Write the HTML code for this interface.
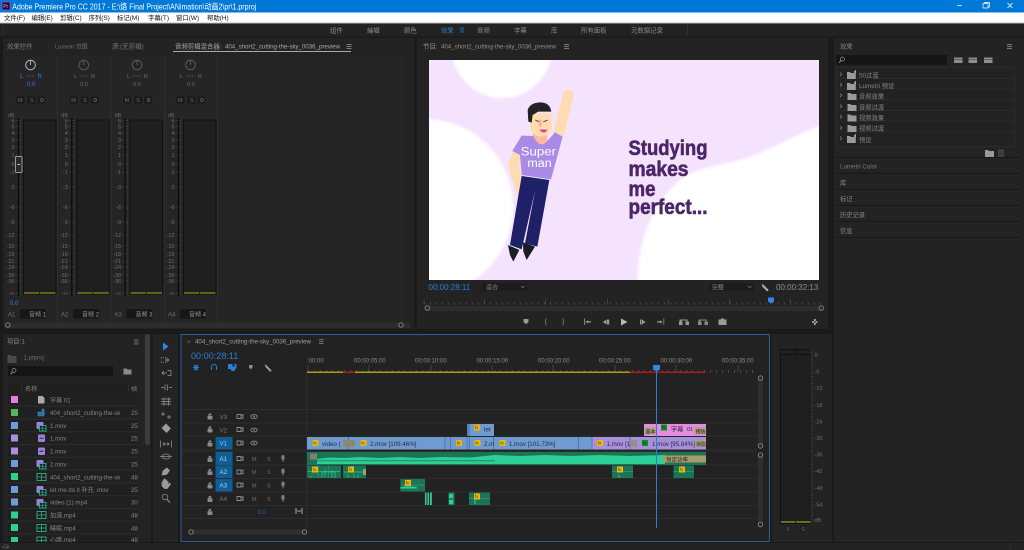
<!DOCTYPE html>
<html><head><meta charset="utf-8"><title>Adobe Premiere Pro CC 2017</title>
<style>
html,body{margin:0;padding:0;width:1024px;height:550px;overflow:hidden;background:#1a1a1a}
svg.root{display:block;filter:blur(.3px)}
text{font-family:"Liberation Sans","Noto Sans CJK SC",sans-serif;font-size:6.4px;fill:#8a8a8a}
.b{fill:#2a7fd6}
.m{fill:#6e6e6e;font-size:5.5px}
.c{fill:#2b2b3a;font-size:6.2px}
.p{font-size:6.1px;fill:#858585}
.e{font-size:6.3px;fill:#858585}
.t{font-size:6.4px;fill:#111}
.r{font-size:6px;fill:#8c8c8c}
.imp{font-size:21px;font-weight:bold;fill:#4c2667;stroke:#4c2667;stroke-width:.6}
</style></head><body>
<svg class="root" width="1024" height="550" viewBox="0 0 1024 550" xmlns="http://www.w3.org/2000/svg">
<defs>
<clipPath id="pv"><rect x="429" y="60" width="390" height="220"/></clipPath>
<filter id="soft" x="-10%" y="-10%" width="120%" height="120%"><feGaussianBlur stdDeviation="1.2"/></filter>
<g id="mx">
<text class="m" x="8" y="117">dB</text>
<g text-anchor="end">
<text class="m" x="14.5" y="122.5">6</text><text class="m" x="14.5" y="128.5">5</text><text class="m" x="14.5" y="135">4</text><text class="m" x="14.5" y="142">3</text><text class="m" x="14.5" y="149">2</text><text class="m" x="14.5" y="157">1</text><text class="m" x="14.5" y="166">0</text><text class="m" x="14.5" y="174">-1</text><text class="m" x="14.5" y="189">-3</text><text class="m" x="14.5" y="209">-6</text><text class="m" x="14.5" y="224">-9</text><text class="m" x="14.5" y="237">-12</text><text class="m" x="14.5" y="248">-15</text><text class="m" x="14.5" y="256">-18</text><text class="m" x="14.5" y="263">-21</text><text class="m" x="14.5" y="269">-24</text><text class="m" x="14.5" y="277">-30</text><text class="m" x="14.5" y="283">-36</text><text class="m" x="14.5" y="295">-∞</text>
</g>
<path d="M15.5 120.5h6M15.5 126.5h6M15.5 133h6M15.5 140h6M15.5 147h6M15.5 155h6M15.5 164h6M15.5 172h6M15.5 187h6M15.5 207h6M15.5 222h6M15.5 235h6M15.5 246h6M15.5 254h6M15.5 261h6M15.5 267h6M15.5 275h6M15.5 281h6M15.5 293h6" stroke="#555" stroke-width=".6" stroke-dasharray="2 1.5"/>
<rect x="17.8" y="118" width="1.3" height="178" fill="#0c0c0c"/>
<path d="M20.8 118V296" stroke="#4a4a4a" stroke-width=".7" stroke-dasharray="1 1.5"/>
<rect x="23.5" y="120" width="32.5" height="174" fill="#1f1f1f" stroke="#111" stroke-width="1"/>
<path d="M24 293h15.2M40 293h15.5" stroke="#7e7a1c" stroke-width="1.4"/>
<circle cx="30.5" cy="65" r="4.8" fill="none" stroke-width="1" stroke="#5a5a5a"/><path d="M30.5 60V65" stroke="#5a5a5a"/>
<path d="M26 76h9" stroke="#4d4d4d" stroke-width="1" stroke-dasharray="1 .5"/>
<g fill="#1a1a1a" stroke="#2d2d2d" stroke-width=".6"><rect x="16" y="96" width="9" height="8" rx="1"/><rect x="27" y="96" width="9" height="8" rx="1"/><rect x="37" y="96" width="9" height="8" rx="1"/></g>
<text class="m" x="18" y="102.2">M</text><text class="m" x="29.7" y="102.2">S</text><text class="m" x="39.5" y="102.2">⚙</text>
<rect x="20" y="309" width="26" height="9.5" rx="1" fill="#171717"/>
</g>
<g id="fo"><path d="M0 2h3l1 1h5v6H0z" fill="#9a9a9a"/></g>
<g id="fp"><path d="M0 2h3l1 1h3V1h1V0h1v3h-.2V9H0z" fill="#9a9a9a"/></g>
<g id="fx"><rect width="6" height="6" fill="#e7b90e"/><text x=".8" y="4.7" style="font-size:4.5px;fill:#5b4300">fx</text></g>
<g id="gx"><rect width="6" height="6" fill="#0f8f1b"/><text x=".8" y="4.7" style="font-size:4.5px;fill:#063f0a">fx</text></g>
<g id="clipico"><rect x="0" y="0" width="7" height="7" rx="1" fill="#9c80dc"/><rect x="3" y="3.5" width="6.5" height="5.5" fill="#1c1c1c" stroke="#2bb68a" stroke-width=".9"/><path d="M3 6.2h6.5M6.2 3.5v5.5" stroke="#2bb68a" stroke-width=".7"/></g>
<g id="greenico"><rect x="0" y="0" width="9" height="7" fill="#1c1c1c" stroke="#2bb68a" stroke-width=".9"/><path d="M0 3.5h9M4.5 0v7" stroke="#2bb68a" stroke-width=".8"/></g>
<g id="purpico"><rect x="0" y="0" width="7" height="7.5" rx="1" fill="#9c80dc"/><rect x="1.5" y="3.2" width="4" height="1" fill="#222"/></g>
<g id="lock"><path d="M-2.2 0h4.4v3.2h-4.4zM-1.3 0v-1.2a1.3 1.3 0 0 1 2.6 0" fill="#8a8a8a" stroke="#8a8a8a" stroke-width=".5"/></g>
<g id="cam"><path d="M-3 -2h4v4h-4zM1 -.8l2-1.2v4l-2-1.2" fill="none" stroke="#8a8a8a" stroke-width=".9"/></g>
<g id="eye"><ellipse rx="3.2" ry="1.9" fill="none" stroke="#8a8a8a" stroke-width=".9"/><circle r=".9" fill="#8a8a8a"/></g>
<g id="mic"><rect x="-1.6" y="-3.5" width="3.2" height="5" rx="1.6" fill="#7e7e7e"/><path d="M0 1.5V3.5" stroke="#7e7e7e"/></g>
</defs>

<rect width="1024" height="550" fill="#1a1a1a"/>
<!-- title bar -->
<rect width="1024" height="12.5" fill="#0078d7"/>
<rect x="2" y="2" width="8" height="8" fill="#2a0a38" stroke="#a564c8" stroke-width=".6"/>
<text x="3.2" y="8" style="font-size:5px;fill:#d9a6f0">Pr</text>
<text x="12.3" y="9.3" textLength="244" lengthAdjust="spacingAndGlyphs" style="font-size:8.5px;fill:#fff">Adobe Premiere Pro CC 2017 - E:\烙 Final Project\ANimation\动画2\pr\1.prproj</text>
<path d="M957 5.5h5" stroke="#fff" stroke-width=".7"/>
<path d="M983 3.5h5v4.5h-5zM984.5 3.5v-1h5v4.5h-1.5" fill="none" stroke="#fff" stroke-width=".7"/>
<path d="M1007.5 3l5 5M1012.5 3l-5 5" stroke="#fff" stroke-width=".8"/>
<!-- menu -->
<rect y="12.5" width="1024" height="10" fill="#fff"/>
<rect y="22.5" width="1024" height="1" fill="#bbb"/>
<text class="t" x="4" y="20">文件(F)</text><text class="t" x="31.5" y="20">编辑(E)</text><text class="t" x="60" y="20">剪辑(C)</text><text class="t" x="88.5" y="20">序列(S)</text><text class="t" x="117" y="20">标记(M)</text><text class="t" x="148" y="20">字幕(T)</text><text class="t" x="176" y="20">窗口(W)</text><text class="t" x="207" y="20">帮助(H)</text>
<!-- workspaces -->
<rect y="23.5" width="1024" height="13" fill="#222"/>
<path d="M3 25v10M687.5 24v12" stroke="#2e2e2e"/>
<text x="330" y="32.5">组件</text><text x="367" y="32.5">编辑</text><text x="404" y="32.5">颜色</text><text x="441" y="32.5" class="b">效果</text>
<path d="M460 28h4M460 30h4M460 32h4" stroke="#2a7fd6" stroke-width=".8"/>
<text x="477" y="32.5">音频</text><text x="514" y="32.5">字幕</text><text x="551" y="32.5">库</text><text x="581" y="32.5">所有面板</text><text x="631" y="32.5">元数据记录</text>

<!-- mixer panel -->
<rect x="3" y="38" width="411" height="291" fill="#232323"/>
<text x="7" y="48.5" style="fill:#7a7a7a">效果控件</text><text x="55" y="48.5" style="font-size:5.8px;fill:#707070">Lumetri 范围</text><text x="112" y="48.5" style="fill:#777">源:(无剪辑)</text>
<text x="175" y="48.5" style="fill:#a8a8a8">音频剪辑混合器:</text>
<text x="225" y="48.5" textLength="115" lengthAdjust="spacingAndGlyphs" style="font-size:6.2px;fill:#a8a8a8">404_short2_cutting-the-sky_0036_preview</text>
<path d="M346.5 44.5h5M346.5 46.5h5M346.5 48.5h5" stroke="#999" stroke-width=".7"/>
<rect x="173" y="51" width="178" height="1" fill="#aaa"/>
<rect x="4" y="56" width="401" height="266" fill="#252525"/>
<path d="M57.5 56v266M111 56v266M164.5 56v266M217.5 56v266" stroke="#2f2f2f"/>
<use href="#mx"/><use href="#mx" x="53.3"/><use href="#mx" x="106.6"/><use href="#mx" x="160"/>
<circle cx="30.5" cy="65" r="4.8" fill="#252525" stroke="#b0b0b0" stroke-width="1"/><path d="M30.5 60V65" stroke="#b0b0b0"/>
<text x="20" y="78" style="font-size:6px;fill:#2a7fd6">L</text><text x="37.5" y="78" style="font-size:6px;fill:#2a7fd6">R</text>
<text x="27" y="86" style="font-size:6px;fill:#2a7fd6">0.0</text>
<text x="74" y="78" class="m">L</text><text x="91" y="78" class="m">R</text><text x="80" y="86" class="m">0.0</text><text x="127" y="78" class="m">L</text><text x="144" y="78" class="m">R</text><text x="133" y="86" class="m">0.0</text><text x="180" y="78" class="m">L</text><text x="198" y="78" class="m">R</text><text x="187" y="86" class="m">0.0</text>
<rect x="15.5" y="156.5" width="6.5" height="16" rx="1" fill="#2a2a2a" stroke="#9a9a9a" stroke-width="1"/><path d="M17.5 164.5h2.5" stroke="#ccc"/>
<text x="10" y="305" style="font-size:6px;fill:#2a7fd6">0.0</text>
<text x="8" y="316.5" class="m" style="font-size:6px">A1</text><text x="61" y="316.5" class="m" style="font-size:6px">A2</text><text x="114.5" y="316.5" class="m" style="font-size:6px">A3</text><text x="168" y="316.5" class="m" style="font-size:6px">A4</text>
<text x="29" y="316.5" style="font-size:6px;fill:#999">音频 1</text><text x="82" y="316.5" style="font-size:6px;fill:#999">音频 2</text><text x="135.5" y="316.5" style="font-size:6px;fill:#999">音频 3</text><text x="189" y="316.5" style="font-size:6px;fill:#999">音频 4</text>
<rect x="5" y="322.5" width="405" height="5.5" fill="#2d2d2d"/>
<circle cx="7.8" cy="325" r="2.2" fill="#232323" stroke="#8a8a8a" stroke-width=".9"/><circle cx="401" cy="325" r="2.2" fill="#232323" stroke="#8a8a8a" stroke-width=".9"/>

<!-- program panel -->
<rect x="417" y="38" width="411" height="291" fill="#232323"/>
<text x="423" y="48.5" style="fill:#8f8f8f">节目:</text>
<text x="441" y="48.5" textLength="115" lengthAdjust="spacingAndGlyphs" style="font-size:6.2px;fill:#8f8f8f">404_short2_cutting-the-sky_0036_preview</text>
<path d="M564 44.5h5M564 46.5h5M564 48.5h5" stroke="#999" stroke-width=".7"/>
<!-- preview -->
<g clip-path="url(#pv)">
<rect x="429" y="60" width="390" height="220" fill="#f5e3fd"/>
<g filter="url(#soft)">
<circle cx="502" cy="48" r="50" fill="#fff"/>
<circle cx="425" cy="207" r="88" fill="#fff"/>
<path d="M637 290C637 245 650 205 680 180C700 165 730 165 755 155C775 147 795 135 830 122V290Z" fill="#fff"/>
</g>
<g transform="translate(480 70) scale(.3333)">
<path d="M265 75L236 190" stroke="#fedcb2" stroke-width="32" stroke-linecap="round" fill="none"/>
<path d="M113 250L100 285L126 370" stroke="#fedcb2" stroke-width="30" stroke-linecap="round" stroke-linejoin="round" fill="none"/>
<path d="M125 318L90 525L125 538L166 358L135 520L172 530L208 330Z" fill="#1e2068"/>
<path d="M84 525L118 540L100 575L90 555ZM129 517L165 530L140 570L130 545Z" fill="#1c1c24"/>
<path d="M158 190h44v34q-22 12-44 0z" fill="#ffb9a0"/>
<path d="M125 197L160 198Q180 240 203 212L225 187L248 200L213 328L125 315L120 255L97 243Z" fill="#a98ae6"/>
<path d="M150 130h65v40q-5 30-32 30q-25 0-33-30z" fill="#fedcb2"/>
<path d="M145 155L143 120Q150 98 180 97Q210 97 214 125L175 125L158 135L155 158Z" fill="#232326"/>
<path d="M166 150l12 6M190 156l13-6" stroke="#555" stroke-width="3" fill="none"/>
<path d="M178 174q12 4 24-1q-2 16-11 14q-9 1-13-13z" fill="#e93d6c"/><path d="M178 174q12 4 24-1l-2 5h-20z" fill="#fff"/>
<rect x="176" y="148" width="9" height="22" rx="4" fill="#ffae96"/>
<text x="122" y="257" textLength="106" lengthAdjust="spacingAndGlyphs" style="font-size:36px;fill:#fff">Super</text>
<text x="142" y="291" textLength="73" lengthAdjust="spacingAndGlyphs" style="font-size:36px;fill:#fff">man</text>
</g>
<text x="628.5" y="155" textLength="79" lengthAdjust="spacingAndGlyphs" class="imp">Studying</text>
<text x="628.5" y="176" textLength="60" lengthAdjust="spacingAndGlyphs" class="imp">makes</text>
<text x="628.5" y="196" textLength="27" lengthAdjust="spacingAndGlyphs" class="imp">me</text>
<text x="628.5" y="214" textLength="79" lengthAdjust="spacingAndGlyphs" class="imp">perfect...</text>
</g>
<text x="428.5" y="290" style="font-size:8px;fill:#2a7fd6">00:00:28:11</text>
<rect x="482" y="283" width="45" height="8" fill="#1c1c1c"/><text x="486" y="289.5" style="font-size:6px">适合</text><path d="M521 286l1.8 1.8 1.8-1.8" stroke="#777" fill="none" stroke-width=".7"/>
<rect x="709" y="283" width="45" height="8" fill="#1c1c1c"/><text x="712" y="289.5" style="font-size:6px">完整</text><path d="M748 286l1.8 1.8 1.8-1.8" stroke="#777" fill="none" stroke-width=".7"/>
<path d="M762 284l2 1.5 4.5 4.5-1.3 1.3-4.5-4.5z" fill="#aaa" stroke="#aaa" stroke-width=".5"/>
<text x="776" y="290" style="font-size:8px;fill:#8f8f8f">00:00:32:13</text>
<path d="M424 303.5H822" stroke="#4a4a4a" stroke-width="2" stroke-dasharray="1 5"/>
<path d="M424 304.5V299M484.3 304.5V299M545.5 304.5V299M607.5 304.5V299M668 304.5V299M729.5 304.5V299M790.5 304.5V299" stroke="#4a4a4a" stroke-width=".8"/>
<path d="M768 297.5h6v4l-3 2-3-2z" fill="#2f86e6"/>
<rect x="427" y="306" width="395" height="5" fill="#2d2d2d"/>
<circle cx="427.3" cy="308" r="2.2" fill="#232323" stroke="#8a8a8a" stroke-width=".9"/><circle cx="821.3" cy="308" r="2.2" fill="#232323" stroke="#8a8a8a" stroke-width=".9"/>
<g fill="#9a9a9a" stroke="none">
<path d="M523.5 319h5v3l-2.5 2.2-2.5-2.2z"/>
<path d="M547 318.5q-1.5 0-1.2 1.5v1l-.8.7.8.7v1q-.3 1.5 1.2 1.5" fill="none" stroke="#8a8a8a" stroke-width=".6"/>
<path d="M562 318.5q1.5 0 1.2 1.5v1l.8.7-.8.7v1q.3 1.5-1.2 1.5" fill="none" stroke="#8a8a8a" stroke-width=".6"/>
<path d="M584 318.5v6.5h.8v-6.5zM588 320.2l-2.5 1.7 2.5 1.7zM588 321.3h3v1.2h-3z"/>
<path d="M606.5 319.5v5l-3.7-2.5zM607 319.5h2.2v5h-2.2z"/>
<path d="M621 318.5v7l6.5-3.5z" fill="#b8b8b8"/>
<path d="M640 319.5h1.5v5H640zM642 319.5v5l3.5-2.5z"/>
<path d="M657 321.3h3v1.2h-3zM660 320.2v3.4l2.5-1.7zM663.5 318.5v6.5h.7v-6.5z"/>
<path d="M679.5 319.5h8v2h1.5v3.5h-3.5v-3.5h1v-1h-5v1h1v3.5h-3.5v-3.5h.5z"/>
<path d="M698.5 319.5h8v2h1.5v3.5h-3.5v-3.5h1v-1h-5v1h1v3.5h-3.500v-3.5h.5z" opacity=".85"/>
<path d="M718.5 319.5h2l.7-1h2.6l.7 1h2v5.5h-8z"/>
<path d="M814 319v6h1.600v-6zM812 321.2h5.5v1.5H812z" fill="#bdbdbd"/>
</g>

<!-- effects panel -->
<rect x="834" y="38" width="190" height="504" fill="#232323"/>
<text x="840" y="48.5" class="e">效果</text>
<path d="M1007 44.5h5M1007 46.5h5M1007 48.5h5" stroke="#999" stroke-width=".7"/>
<rect x="836" y="55" width="111" height="10" fill="#151515"/>
<circle cx="842.5" cy="59" r="2" fill="none" stroke="#999" stroke-width=".7"/><path d="M841 60.5l-1.8 2.3" stroke="#999"/>
<g fill="#8e8e8e">
<path d="M954 57.5h8.5v5.5h-8.5zM968.5 57.5h8.5v5.5h-8.5zM984 57.5h8.5v5.5H984z"/>
<path d="M954 59.5h8.5M968.5 59.5h8.5M984 59.5h8.5" stroke="#333" stroke-width=".6"/>
</g>
<rect x="836.5" y="67.5" width="178" height="79" fill="#222" stroke="#2b2b2b"/>
<path d="M837 78.5h177M837 89h177M837 99.7h177M837 110.5h177M837 121h177M837 132h177" stroke="#2b2b2b"/>
<g stroke="#8a8a8a" fill="none" stroke-width=".7"><path d="M840 72.5l1.8 1.8-1.8 1.8M840 83l1.8 1.8-1.8 1.8M840 93.5l1.8 1.8-1.8 1.8M840 104.5l1.8 1.8-1.8 1.8M840 115l1.8 1.8-1.8 1.8M840 126l1.8 1.8-1.8 1.8M840 136.5l1.8 1.8-1.8 1.8"/></g>
<use href="#fp" x="847" y="70"/><use href="#fp" x="847" y="81"/><use href="#fo" x="847.5" y="91"/><use href="#fo" x="847.5" y="102"/><use href="#fo" x="847.5" y="112.5"/><use href="#fo" x="847.5" y="123"/><use href="#fp" x="847" y="134"/>
<text x="859" y="77.5" class="e">50过渡</text><text x="859" y="88" class="e">Lumetri 预设</text><text x="859" y="98.5" class="e">音频效果</text><text x="859" y="109.5" class="e">音频过渡</text><text x="859" y="120" class="e">视频效果</text><text x="859" y="130.5" class="e">视频过渡</text><text x="859" y="142" class="e">预设</text>
<use href="#fo" x="985" y="148"/>
<path d="M998.5 150.5h5v6h-5zM998 150h6" stroke="#4a4a4a" fill="#3a3a3a" stroke-width=".7"/>
<path d="M835 157.5h185M835 173.5h185M835 189.5h185M835 205.5h185M835 221.5h185M835 237.5h185" stroke="#171717"/>
<text x="840" y="168.5" style="font-size:6.2px;fill:#7a7a7a">Lumetri Color</text>
<text x="840" y="185" class="e">库</text><text x="840" y="201" class="e">标记</text><text x="840" y="217" class="e">历史记录</text><text x="840" y="233" class="e">信息</text>

<!-- project panel -->
<rect x="3" y="334" width="148" height="208" fill="#232323"/>
<text x="7" y="343.5" class="e">项目:1</text>
<path d="M134 340h4.500M134 342h4.500M134 344h4.500" stroke="#888" stroke-width=".7"/>
<path d="M7.500 355h3l1 1h5v7h-9z" fill="#4a4a4a"/>
<text x="23.500" y="359.500" style="font-size:6px;fill:#707070">1.prproj</text>
<rect x="8" y="366" width="105" height="10" fill="#151515"/>
<circle cx="14" cy="370.500" r="2" fill="none" stroke="#999" stroke-width=".7"/><path d="M12.500 372l-1.800 2.300" stroke="#999"/>
<path d="M123.500 368.500h3l1 1h4v5h-8z" fill="#8a8a8a"/>
<rect x="8" y="384" width="129" height="9.500" fill="#1f1f1f"/>
<text x="25" y="391" class="p">名称</text><text x="131" y="391" class="p">帧</text>
<path d="M21.500 384v9M128.500 384v9" stroke="#2c2c2c"/>
<rect x="8" y="393.500" width="129" height="148.500" fill="#202020"/>
<path d="M8 406h129M8 419h129M8 431.700h129M8 444.500h129M8 457.300h129M8 470h129M8 483h129M8 495.700h129M8 508.500h129M8 521.300h129M8 534h129" stroke="#2c2c2c"/>
<rect x="11" y="396" width="7" height="7" fill="#e67ce0"/><rect x="11" y="409" width="7" height="7" fill="#57b45c"/><rect x="11" y="422" width="7" height="7" fill="#6f9bd8"/><rect x="11" y="434.500" width="7" height="7" fill="#a98fe0"/><rect x="11" y="447.500" width="7" height="7" fill="#a98fe0"/><rect x="11" y="460" width="7" height="7" fill="#6f9bd8"/><rect x="11" y="473" width="7" height="7" fill="#2fd08f"/><rect x="11" y="486" width="7" height="7" fill="#6f9bd8"/><rect x="11" y="498.500" width="7" height="7" fill="#6f9bd8"/><rect x="11" y="511.500" width="7" height="7" fill="#2fd08f"/><rect x="11" y="524" width="7" height="7" fill="#2fd08f"/><rect x="11" y="537" width="7" height="5" fill="#2fd08f"/>
<path d="M38 396h4.500l2 2v5.500H38z" fill="#aaa"/>
<path d="M38 412h3v4h-3zM42 409v7h2v-7zM41 413h4.500" stroke="#3d8fc8" fill="#2a6d9a" stroke-width=".6"/>
<use href="#clipico" x="36.500" y="422"/><use href="#purpico" x="38" y="434.500"/><use href="#purpico" x="38" y="447.500"/><use href="#clipico" x="36.500" y="460"/><use href="#greenico" x="37" y="473.500"/><use href="#clipico" x="36.500" y="486"/><use href="#clipico" x="36.500" y="499"/><use href="#greenico" x="37" y="511.500"/><use href="#greenico" x="37" y="524.500"/><use href="#greenico" x="37" y="537"/>
<text x="50" y="402.500" class="p">字幕 01</text>
<text x="50" y="415" class="p">404_short2_cutting-the-sk</text>
<text x="50" y="428" class="p">1.mov</text>
<text x="50" y="440.700" class="p">1.mov</text>
<text x="50" y="453.700" class="p">1.mov</text>
<text x="50" y="466.500" class="p">2.mov</text>
<text x="50" y="479.500" class="p">404_short2_cutting-the-sk</text>
<text x="50" y="492" class="p">let me do it 补充 .mov</text>
<text x="50" y="504.700" class="p">video (1).mp4</text>
<text x="50" y="517.700" class="p">加速.mp4</text>
<text x="50" y="530.400" class="p">睡眠.mp4</text>
<text x="50" y="541.800" class="p">心跳.mp4</text>
<text x="131" y="415" class="p">25</text><text x="131" y="428" class="p">25</text><text x="131" y="440.700" class="p">25</text><text x="131" y="453.700" class="p">25</text><text x="131" y="466.500" class="p">25</text><text x="131" y="479.500" class="p">48</text><text x="131" y="492" class="p">25</text><text x="131" y="504.700" class="p">30</text><text x="131" y="517.700" class="p">48</text><text x="131" y="530.400" class="p">48</text><text x="131" y="541.800" class="p">48</text>
<rect x="145" y="334" width="5" height="111" rx="2.500" fill="#3c3c3c"/>

<!-- tools -->
<rect x="153" y="334" width="25" height="208" fill="#232323"/>
<path d="M163 342.500v8l5.500-4z" fill="#2f86e6"/>
<g fill="#9a9a9a" stroke="#9a9a9a" stroke-width=".7">
<path d="M161 357.500h5v5h-5z" fill="none" stroke-dasharray="1 1"/><path d="M165 360h3M167 358l2 2-2 2" fill="none"/>
<path d="M162 373h5M164 371l-2 2 2 2M167.500 370.500h3.500v5h-3.500" fill="none"/>
<path d="M161 387.500h3M169 387.500h3M165 384.500v6M167.500 384.500v6" fill="none"/>
<path d="M161 399h10M161 401.500h10M161 404h10M164 397.500v8M168.500 397.500v8" fill="none"/>
<path d="M161 414h4M163 412v4M167 417h4M169 415v4" fill="none"/>
<path d="M162 428l4-4 4.500 4.500-4 4z"/>
<path d="M160.500 440.500v7M171.500 440.500v7M163 444h6M164.500 442.500l-1.500 1.500 1.500 1.500M167.500 442.500l1.500 1.500-1.500 1.500" fill="none"/>
<ellipse cx="166" cy="456.500" rx="4" ry="2.500" fill="none"/><path d="M160 456.500h12" fill="none"/>
<path d="M162 475l1-4 4-3 2.500 2.500-3 4z"/>
<path d="M162 486v-3.500q0-1 1 0v-2q0-1 1 0v-1q.7-1 1.400 0v1q.7-1 1.400 0v1.500q1-1 1.400 0v3l1.300-1.500q1-.5 .8 1l-3 4h-3z"/>
<circle cx="165" cy="497" r="2.800" fill="none"/><path d="M167 499.500l3 3" fill="none" stroke-width="1"/>
</g>

<!-- timeline -->
<rect x="181" y="334.500" width="588.500" height="207" fill="#222" stroke="#2a5f9e"/>
<text x="187" y="344" style="font-size:6px;fill:#777">×</text>
<text x="195" y="343.500" textLength="116" lengthAdjust="spacingAndGlyphs" style="font-size:6.200px;fill:#a0a0a0">404_short2_cutting-the-sky_0036_preview</text>
<path d="M319 339.500h4.500M319 341.500h4.500M319 343.500h4.500" stroke="#888" stroke-width=".7"/>
<text x="191" y="359" style="font-size:9.100px;fill:#2a7fd6">00:00:28:11</text>
<g fill="none" stroke="#2a7fd6" stroke-width="1">
<path d="M193 367.500h6M196 364.500v6M194 365l4 5M198 365l-4 5"/>
<path d="M211.500 370v-3a2.500 2.500 0 0 1 5 0v3"/>
<path d="M228.500 364.500h3.500v2.500h3v-2.500h1v3l-2 3h-2l-1-2h-2.500z" fill="#2a7fd6"/>
</g>
<path d="M249 365h3.500v2.500l-1.750 1.800-1.750-1.800z" fill="#8f8f8f"/>
<path d="M265 364.500l2 1.500 4.500 4.500-1.200 1.200-4.500-4.500z" fill="#9a9a9a" stroke="#9a9a9a" stroke-width=".5"/>
<!-- ruler -->
<text x="307" y="362.500" class="r">:00:00</text><text x="354" y="362.500" class="r">00:00:05:00</text><text x="415" y="362.500" class="r">00:00:10:00</text><text x="476.500" y="362.500" class="r">00:00:15:00</text><text x="538" y="362.500" class="r">00:00:20:00</text><text x="599" y="362.500" class="r">00:00:25:00</text><text x="660.500" y="362.500" class="r">00:00:30:00</text><text x="722" y="362.500" class="r">00:00:35:00</text>
<path d="M308 371.500H755" stroke="#4a4a4a" stroke-width="3" stroke-dasharray="1 5"/>
<path d="M308 372V365M369 372V365M431 372V365M492 372V365M553 372V365M615 372V365M676 372V365M738 372V365" stroke="#4a4a4a" stroke-width=".8"/>
<rect x="307" y="371.500" width="323" height="1.500" fill="#a8a00e"/>
<rect x="343" y="371.500" width="12" height="1.500" fill="#b01c1c"/>
<rect x="630" y="371.500" width="76" height="1.500" fill="#b01c1c"/>
<!-- tracks grid -->
<path d="M181.500 409.500H757M181.500 423H757M181.500 436H757M181.500 449.500H757M181.500 451.500H757M181.500 465H757M181.500 478.500H757M181.500 492H757M181.500 505.500H757M181.500 518.500H757" stroke="#2c2c2c"/>
<rect x="306" y="372" width="1" height="157" fill="#2c2c2c"/>
<!-- track heads -->
<use href="#lock" x="210" y="416"/><use href="#lock" x="210" y="429"/><use href="#lock" x="210" y="443"/><use href="#lock" x="210" y="458.500"/><use href="#lock" x="210" y="471.500"/><use href="#lock" x="210" y="485"/><use href="#lock" x="210" y="498.500"/><use href="#lock" x="210" y="511.500"/>
<rect x="215.500" y="437" width="17" height="12.500" fill="#0f5f97"/><rect x="215.500" y="452" width="17" height="13" fill="#0f5f97"/><rect x="215.500" y="465.500" width="17" height="12.500" fill="#0f5f97"/><rect x="215.500" y="479" width="17" height="12.500" fill="#0f5f97"/>
<text x="219.500" y="419" style="font-size:6.200px;fill:#777">V3</text><text x="219.500" y="432.500" style="font-size:6.200px;fill:#777">V2</text><text x="219.500" y="445.500" style="font-size:6.200px;fill:#9ac4e2">V1</text>
<text x="219.500" y="461" style="font-size:6.200px;fill:#b9d3e6">A1</text><text x="219.500" y="474" style="font-size:6.200px;fill:#b9d3e6">A2</text><text x="219.500" y="487.500" style="font-size:6.200px;fill:#b9d3e6">A3</text><text x="219.500" y="501" style="font-size:6.200px;fill:#777">A4</text>
<use href="#cam" x="240" y="416.500"/><use href="#cam" x="240" y="429.500"/><use href="#cam" x="240" y="443"/><use href="#cam" x="240" y="458.500"/><use href="#cam" x="240" y="472"/><use href="#cam" x="240" y="485"/><use href="#cam" x="240" y="498.500"/>
<use href="#eye" x="254" y="416.500"/><use href="#eye" x="254" y="430"/><use href="#eye" x="254" y="443"/>
<text x="252" y="461" class="m">M</text><text x="252" y="474" class="m">M</text><text x="252" y="487.500" class="m">M</text><text x="252" y="501" class="m">M</text>
<text x="267" y="461" class="m">S</text><text x="267" y="474" class="m">S</text><text x="267" y="487.500" class="m">S</text><text x="267" y="501" class="m">S</text>
<use href="#mic" x="283" y="458.500"/><use href="#mic" x="283" y="472"/><use href="#mic" x="283" y="485"/><use href="#mic" x="283" y="498.500"/>
<text x="257.500" y="514" style="font-size:6px;fill:#2467ae">0.0</text>
<path d="M296 508v6M302 508v6M297 511h4" stroke="#aaa" stroke-width="1"/>
<rect x="190" y="529.500" width="116" height="5" fill="#2f2f2f"/>
<circle cx="191" cy="532" r="2.200" fill="#232323" stroke="#8a8a8a" stroke-width=".9"/><circle cx="304.500" cy="532" r="2.200" fill="#232323" stroke="#8a8a8a" stroke-width=".9"/>

<!-- V1 clips -->
<rect x="307" y="437" width="285" height="12.500" fill="#6f9bd1"/>
<rect x="592" y="437" width="114" height="12.500" fill="#a68fdc"/>
<path d="M348.500 437v12.500M445 437v12.500M450.500 437v12.500M467 437v12.500M469.500 437v12.500M493.500 437v12.500M578.500 437v12.500M592 437v12.500M630 437v12.500" stroke="#4f6f9c" stroke-width=".8"/>
<rect x="343" y="440" width="12" height="7" fill="#8e8872"/>
<use href="#fx" x="312.500" y="440"/><use href="#fx" x="360.500" y="440"/><use href="#fx" x="456" y="440"/><use href="#fx" x="474.500" y="440"/><use href="#fx" x="499.500" y="440"/><use href="#fx" x="597" y="440"/><use href="#gx" x="642" y="440"/>
<text class="c" x="322" y="445.800">video (</text><text class="c" x="370" y="445.800">2.mov [109.46%]</text><text class="c" x="484" y="445.800">2.m</text><text class="c" x="509" y="445.800">1.mov [101.73%]</text><text class="c" x="606.500" y="445.800">1.mov [1</text><text class="c" x="652" y="445.800">1.mov [95.84%]</text>
<rect x="631" y="440" width="6" height="7" fill="#9b8f7e"/>
<rect x="695" y="440" width="11" height="7" fill="#b2a37e"/><text x="696" y="446" style="font-size:5px;fill:#222">渐隐</text>
<!-- V2 clips -->
<rect x="467" y="424" width="27" height="12" fill="#6f9bd1"/><rect x="467" y="424" width="3" height="12" fill="#5b83b6"/>
<use href="#fx" x="474" y="424.500"/><text class="c" x="484" y="431.500">let</text>
<rect x="644" y="424" width="62" height="12" fill="#e58be0"/>
<rect x="644.500" y="427" width="12" height="7.500" fill="#b3a180"/><text x="645.500" y="433.500" style="font-size:5px;fill:#222">基本</text>
<rect x="694.500" y="427" width="11.500" height="7.500" fill="#b3a180"/><text x="695.500" y="433.500" style="font-size:5px;fill:#222">预防</text>
<use href="#gx" x="661" y="424.500"/><text class="c" x="671" y="431.500">字幕</text><text class="c" x="687" y="430.800" style="font-size:5.500px">01</text>
<!-- A1 -->
<rect x="307" y="452" width="399" height="13" fill="#1c7457"/>
<rect x="310" y="453.500" width="7" height="6" fill="#857f73"/>
<path d="M317 459 330 457.500 345 458 360 457 380 458 400 457 420 458 440 457 470 457.500 495 455 520 456 545 455 570 456 600 455 630 456 665 455V464H317Z" fill="#2ccf95"/>
<path d="M317 460.800h178" stroke="#1e8a66" stroke-width="1"/>
<rect x="663" y="455.500" width="43" height="7" fill="#a89a6d"/>
<text x="666" y="461.500" style="font-size:5.500px;fill:#2c2c1c">恒定功率</text>
<!-- A2 -->
<g fill="#1c7457">
<rect x="307" y="465.500" width="34" height="12.500"/><rect x="343" y="465.500" width="23" height="12.500"/><rect x="612" y="465.500" width="21" height="12.500"/><rect x="673.500" y="465.500" width="20.500" height="12.500"/>
<rect x="400.500" y="479" width="24.500" height="12.500"/>
<rect x="469" y="492.500" width="21" height="12.500"/>
</g>
<path d="M322 471.500v6M325 469.500v8M332 470v8M335 472v6M311 476v1.500M348 475v3M354 474v4M358 475v3M322.500 472h12M308 471.500h32M344 472h21" stroke="#2ccf95" stroke-width=".8" opacity=".85"/>
<path d="M318.500 465.500v12.500M328.500 465.500v12.500" stroke="#2ccf95" stroke-width=".6" opacity=".5"/>
<path d="M612 471.500h21M673.500 471.500h20.500M400.500 485h24.500M469 498.500h21" stroke="#2a9f78" stroke-width=".7"/>
<path d="M404 487h10l3 1h-17zM475 499v5M619 475v3" stroke="#2ccf95" stroke-width="1"/>
<use href="#fx" x="312" y="466.500"/><use href="#fx" x="348" y="466.500"/><use href="#fx" x="617" y="466.500"/><use href="#fx" x="679" y="466.500"/>
<rect x="363" y="469" width="3" height="6" fill="#a89a6d"/>
<use href="#fx" x="405" y="480"/><use href="#fx" x="474" y="493.500"/>
<g fill="#2ccf95"><rect x="425" y="492.500" width="1.500" height="12.500"/><rect x="427.500" y="492.500" width="1.500" height="12.500"/><rect x="430" y="492.500" width="1.800" height="12.500"/><rect x="448.500" y="492.500" width="6" height="12.500" opacity=".55"/><rect x="449" y="494" width="4" height="4"/><rect x="449" y="500" width="4" height="4"/></g>
<!-- playhead -->
<path d="M656.500 371V528" stroke="#2a7fd6" stroke-width="1"/>
<path d="M653 365h7v4.500l-3.500 2-3.500-2z" fill="#2f86e6"/>
<!-- vscrolls -->
<rect x="758" y="378" width="5" height="68" fill="#2f2f2f"/><rect x="758" y="455" width="5" height="70" fill="#2f2f2f"/>
<circle cx="760.500" cy="378" r="2.200" fill="#232323" stroke="#8a8a8a" stroke-width=".9"/><circle cx="760.500" cy="446" r="2.200" fill="#232323" stroke="#8a8a8a" stroke-width=".9"/><circle cx="760.500" cy="455" r="2.200" fill="#232323" stroke="#8a8a8a" stroke-width=".9"/><circle cx="760.500" cy="524.500" r="2.200" fill="#232323" stroke="#8a8a8a" stroke-width=".9"/>

<!-- audio master -->
<rect x="772" y="334" width="60" height="208" fill="#232323"/>
<rect x="780.500" y="349.500" width="30" height="174" fill="#1f1f1f" stroke="#111"/>
<path d="M781 354.500h29M795.500 349.500v5" stroke="#111"/>
<path d="M781 522h14M796 522h14.500" stroke="#a39c18" stroke-width="1.200"/>
<path d="M811.500 350V524" stroke="#4d4d4d" stroke-width="2" stroke-dasharray=".7 1.500"/>
<text class="m" x="814.500" y="357">0</text><text class="m" x="814.500" y="373.500">-6</text><text class="m" x="814.500" y="390">-12</text><text class="m" x="814.500" y="407">-18</text><text class="m" x="814.500" y="423.500">-24</text><text class="m" x="814.500" y="440">-30</text><text class="m" x="814.500" y="456.500">-36</text><text class="m" x="814.500" y="473">-42</text><text class="m" x="814.500" y="490">-48</text><text class="m" x="814.500" y="506.500">-54</text><text class="m" x="814.500" y="522">dB</text>
<rect x="784" y="525" width="8" height="8" fill="#1e1e1e" stroke="#2e2e2e" stroke-width=".6"/><rect x="799" y="525" width="8" height="8" fill="#1e1e1e" stroke="#2e2e2e" stroke-width=".6"/>
<text class="m" x="786.300" y="531">S</text><text class="m" x="801.300" y="531">S</text>

<!-- status -->
<rect y="542" width="1024" height="8" fill="#232323"/>
<rect y="542" width="1024" height=".8" fill="#171717"/>
<path d="M2.500 547.500h5v-2.500h-3zM5 548h3.500v-3" fill="none" stroke="#555" stroke-width=".7"/>
<path d="M1010 542v8" stroke="#2d2d2d"/>
</svg>
</body></html>
